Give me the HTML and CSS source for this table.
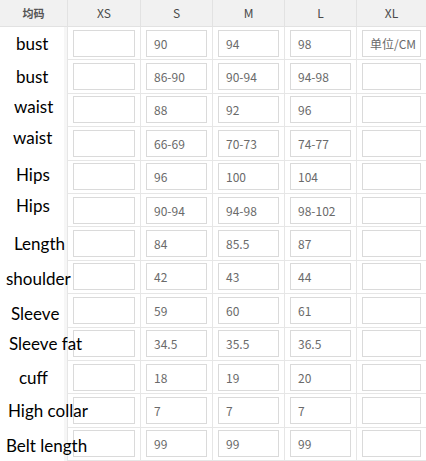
FILE: index.html
```html
<!DOCTYPE html>
<html lang="zh">
<head>
<meta charset="utf-8">
<title>尺码表</title>
<link rel="stylesheet" href="styles.css">
</head>
<body>
<div class="chart">
  <div class="hd hd-first">均码</div>
  <div class="hd">XS</div>
  <div class="hd">S</div>
  <div class="hd">M</div>
  <div class="hd">L</div>
  <div class="hd hd-last">XL</div>

  <div class="lbl l1"><span>bust</span></div>
  <div class="cell"><div class="box"></div></div>
  <div class="cell"><div class="box">90</div></div>
  <div class="cell"><div class="box">94</div></div>
  <div class="cell"><div class="box">98</div></div>
  <div class="cell last"><div class="box">单位/CM</div></div>

  <div class="lbl l2"><span>bust</span></div>
  <div class="cell"><div class="box"></div></div>
  <div class="cell"><div class="box">86-90</div></div>
  <div class="cell"><div class="box">90-94</div></div>
  <div class="cell"><div class="box">94-98</div></div>
  <div class="cell last"><div class="box"></div></div>

  <div class="lbl l3"><span>waist</span></div>
  <div class="cell"><div class="box"></div></div>
  <div class="cell"><div class="box">88</div></div>
  <div class="cell"><div class="box">92</div></div>
  <div class="cell"><div class="box">96</div></div>
  <div class="cell last"><div class="box"></div></div>

  <div class="lbl l4"><span>waist</span></div>
  <div class="cell"><div class="box"></div></div>
  <div class="cell"><div class="box">66-69</div></div>
  <div class="cell"><div class="box">70-73</div></div>
  <div class="cell"><div class="box">74-77</div></div>
  <div class="cell last"><div class="box"></div></div>

  <div class="lbl l5"><span>Hips</span></div>
  <div class="cell"><div class="box"></div></div>
  <div class="cell"><div class="box">96</div></div>
  <div class="cell"><div class="box">100</div></div>
  <div class="cell"><div class="box">104</div></div>
  <div class="cell last"><div class="box"></div></div>

  <div class="lbl l6"><span>Hips</span></div>
  <div class="cell"><div class="box"></div></div>
  <div class="cell"><div class="box">90-94</div></div>
  <div class="cell"><div class="box">94-98</div></div>
  <div class="cell"><div class="box">98-102</div></div>
  <div class="cell last"><div class="box"></div></div>

  <div class="lbl l7"><span>Length</span></div>
  <div class="cell"><div class="box"></div></div>
  <div class="cell"><div class="box">84</div></div>
  <div class="cell"><div class="box">85.5</div></div>
  <div class="cell"><div class="box">87</div></div>
  <div class="cell last"><div class="box"></div></div>

  <div class="lbl l8"><span>shoulder</span></div>
  <div class="cell"><div class="box"></div></div>
  <div class="cell"><div class="box">42</div></div>
  <div class="cell"><div class="box">43</div></div>
  <div class="cell"><div class="box">44</div></div>
  <div class="cell last"><div class="box"></div></div>

  <div class="lbl l9"><span>Sleeve</span></div>
  <div class="cell"><div class="box"></div></div>
  <div class="cell"><div class="box">59</div></div>
  <div class="cell"><div class="box">60</div></div>
  <div class="cell"><div class="box">61</div></div>
  <div class="cell last"><div class="box"></div></div>

  <div class="lbl l10"><span>Sleeve fat</span></div>
  <div class="cell"><div class="box"></div></div>
  <div class="cell"><div class="box">34.5</div></div>
  <div class="cell"><div class="box">35.5</div></div>
  <div class="cell"><div class="box">36.5</div></div>
  <div class="cell last"><div class="box"></div></div>

  <div class="lbl l11"><span>cuff</span></div>
  <div class="cell"><div class="box"></div></div>
  <div class="cell"><div class="box">18</div></div>
  <div class="cell"><div class="box">19</div></div>
  <div class="cell"><div class="box">20</div></div>
  <div class="cell last"><div class="box"></div></div>

  <div class="lbl l12"><span>High collar</span></div>
  <div class="cell"><div class="box"></div></div>
  <div class="cell"><div class="box">7</div></div>
  <div class="cell"><div class="box">7</div></div>
  <div class="cell"><div class="box">7</div></div>
  <div class="cell last"><div class="box"></div></div>

  <div class="lbl l13"><span>Belt length</span></div>
  <div class="cell"><div class="box"></div></div>
  <div class="cell"><div class="box">99</div></div>
  <div class="cell"><div class="box">99</div></div>
  <div class="cell"><div class="box">99</div></div>
  <div class="cell last"><div class="box"></div></div>
</div>
</body>
</html>
```
FILE: styles.css
```css
html, body {
  margin: 0;
  padding: 0;
  background: #ffffff;
}

.chart {
  width: 426px;
  height: 461px;
  display: grid;
  grid-template-columns: 68px 73px 72px 72px 72px 1fr;
  grid-template-rows: 27px repeat(13, 33.4px);
  font-family: "Noto Sans CJK SC", "Noto Sans", sans-serif;
  overflow: hidden;
}

.hd {
  background: #f1f1f1;
  border-right: 1px solid #e2e2e2;
  border-bottom: 1px solid #e2e2e2;
  display: flex;
  align-items: center;
  justify-content: center;
  font-size: 12px;
  color: #4a4a4a;
  padding-bottom: 1px;
}
.hd-first {
  font-size: 11px;
  font-weight: 700;
  color: #555;
}
.hd-last { border-right: none; }

.cell {
  border-right: 1px solid #e6e6e6;
  border-bottom: 1px solid #e6e6e6;
  display: flex;
  align-items: center;
  padding: 0 5px 0 5px;
}
.cell.last { border-right: none; }

.box {
  flex: 1;
  height: 27px;
  box-sizing: border-box;
  border: 1px solid #dadada;
  background: #fff;
  display: flex;
  align-items: center;
  padding-left: 7px;
  font-size: 12px;
  color: #6a6a6a;
  white-space: nowrap;
}

.lbl {
  background: linear-gradient(to right, #ffffff 64px, #f6f6f6 64px);
  border-right: 1px solid #e6e6e6;
  display: flex;
  align-items: center;
  font-family: "Lato", "Liberation Sans", sans-serif;
  font-size: 17px;
  color: #000;
  white-space: nowrap;
  overflow: visible;
  z-index: 1;
}
.lbl span { display: block; }

.l1 { padding-left: 16px; }
.l2 { padding-left: 16px; }
.l2 span { transform: translateY(-1px); }
.l3 { padding-left: 14px; }
.l3 span { transform: translateY(-4px); }
.l4 { padding-left: 13px; }
.l4 span { transform: translateY(-6px); }
.l5 { padding-left: 16px; }
.l5 span { transform: translateY(-3px); }
.l6 { padding-left: 16px; }
.l6 span { transform: translateY(-5px); }
.l7 { padding-left: 14px; }
.l7 span { transform: translateY(-1px); }
.l8 { padding-left: 6px; }
.l8 span { transform: translateY(1px); }
.l9 { padding-left: 11px; }
.l9 span { transform: translateY(3px); }
.l10 { padding-left: 9px; }
.l10 span { transform: translateY(-1px); }
.l11 { padding-left: 19px; }
.l12 { padding-left: 8px; }
.l13 { padding-left: 6px; }
.l13 span { transform: translateY(1px); }
```
